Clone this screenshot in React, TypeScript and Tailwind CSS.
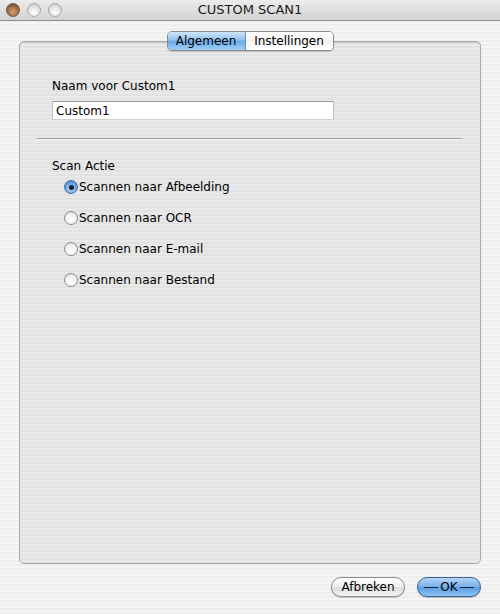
import React from 'react';

const stripes =
  'bg-[repeating-linear-gradient(to_bottom,#eeeeee_0px,#eeeeee_2px,#f5f5f5_2px,#f5f5f5_4px)]';
const panelStripes =
  'bg-[repeating-linear-gradient(to_bottom,#e2e2e2_0px,#e2e2e2_2px,#e9e9e9_2px,#e9e9e9_4px)]';

function TrafficLight({ close }: { close?: boolean }) {
  return (
    <div
      className={
        close
          ? 'w-[14px] h-[14px] rounded-full border border-[#6b5a4a] bg-[radial-gradient(circle_at_50%_65%,#d8a070_0%,#9b6a42_55%,#5a3b25_100%)]'
          : 'w-[14px] h-[14px] rounded-full border border-[#a8a8a8] bg-[radial-gradient(circle_at_50%_70%,#ffffff_0%,#e2e2e2_55%,#b8b8b8_100%)]'
      }
    />
  );
}

function Radio({ checked, label }: { checked?: boolean; label: string }) {
  return (
    <label className="flex items-center h-[14px] gap-[1px]">
      <span
        className={
          checked
            ? 'w-[14px] h-[14px] rounded-full border border-[#3d6fa8] bg-[radial-gradient(circle_at_50%_65%,#bfe0fb_0%,#6fa6dd_55%,#3d79bf_100%)] flex items-center justify-center'
            : 'w-[14px] h-[14px] rounded-full border border-[#8c8c8c] bg-[radial-gradient(circle_at_50%_70%,#ffffff_0%,#f0f0f0_60%,#c8c8c8_100%)]'
        }
      >
        {checked && <span className="w-[5px] h-[5px] rounded-full bg-[#10203a]" />}
      </span>
      <span>{label}</span>
    </label>
  );
}

export default function App() {
  return (
    <div
      className={`w-[500px] h-[614px] flex flex-col text-[12px] text-black ${stripes}`}
      style={{ fontFamily: '"DejaVu Sans", Verdana, sans-serif' }}
    >
      {/* Title bar */}
      <header className="relative h-[21px] flex items-center px-[6px] gap-[7px] border-b border-[#8e8e8e] bg-[linear-gradient(to_bottom,#ececec,#d2d2d2)]">
        <TrafficLight close />
        <TrafficLight />
        <TrafficLight />
        <div className="absolute inset-0 flex items-center justify-center text-[13px] text-[#1a1a1a]">
          CUSTOM SCAN1
        </div>
      </header>

      {/* Body */}
      <div className="flex-1 flex flex-col px-[19px] pt-[10px]">
        {/* Tabs */}
        <div className="relative z-10 flex justify-center">
          <div className="flex h-[20px] rounded-[5px] border border-[#8a8a8a] overflow-hidden shadow-[0_1px_1px_rgba(0,0,0,0.15)]">
            <div className="w-[78px] flex items-center justify-center bg-[linear-gradient(to_bottom,#cfe6fb_0%,#8ec1ef_45%,#6aa9e6_50%,#9dd0f8_100%)] border-r border-[#6b8fb8]">
              Algemeen
            </div>
            <div className="w-[87px] flex items-center justify-center bg-[linear-gradient(to_bottom,#ffffff_0%,#f2f2f2_50%,#ffffff_100%)]">
              Instellingen
            </div>
          </div>
        </div>

        {/* Panel */}
        <div
          className={`-mt-[10px] h-[523px] rounded-[5px] border border-[#a9a9a9] shadow-[inset_0_1px_0_#c8c8c8] ${panelStripes}`}
        >
          <div className="pt-[36px] pl-[32px]">
            <div className="h-[16px] leading-[16px]">Naam voor Custom1</div>
            <div className="mt-[7px] w-[282px] h-[19px] bg-white border border-[#9a9a9a] border-b-[#cfcfcf] border-x-[#bdbdbd] px-[3px] flex items-center">
              Custom1
            </div>
          </div>
          <div className="mt-[18px] ml-[17px] mr-[17px] h-[1px] bg-[#9e9e9e] border-b border-[#f4f4f4] box-content" />
          <div className="pt-[18px] pl-[32px]">
            <div className="h-[16px] leading-[16px]">Scan Actie</div>
            <div className="mt-[6px] ml-[12px] flex flex-col gap-[17px]">
              <Radio checked label="Scannen naar Afbeelding" />
              <Radio label="Scannen naar OCR" />
              <Radio label="Scannen naar E-mail" />
              <Radio label="Scannen naar Bestand" />
            </div>
          </div>
        </div>

        {/* Buttons */}
        <footer className="flex justify-end gap-[12px] mt-[13px]">
          <button className="w-[74px] h-[20px] rounded-full border border-[#8a8a8a] bg-[linear-gradient(to_bottom,#ffffff_0%,#ececec_50%,#dcdcdc_51%,#f6f6f6_100%)] flex items-center justify-center shadow-[0_1px_1px_rgba(0,0,0,0.2)]">
            Afbreken
          </button>
          <button className="w-[64px] h-[20px] rounded-full border border-[#3a5f8f] bg-[linear-gradient(to_bottom,#b5d6f6_0%,#75aee8_50%,#5b9ce0_51%,#8cc4f4_100%)] flex items-center justify-center gap-[2px] shadow-[0_1px_1px_rgba(0,0,0,0.25)]">
            <span className="w-[14px] h-[1px] bg-[#1a2a40]" />
            OK
            <span className="w-[14px] h-[1px] bg-[#1a2a40]" />
          </button>
        </footer>
      </div>
    </div>
  );
}
